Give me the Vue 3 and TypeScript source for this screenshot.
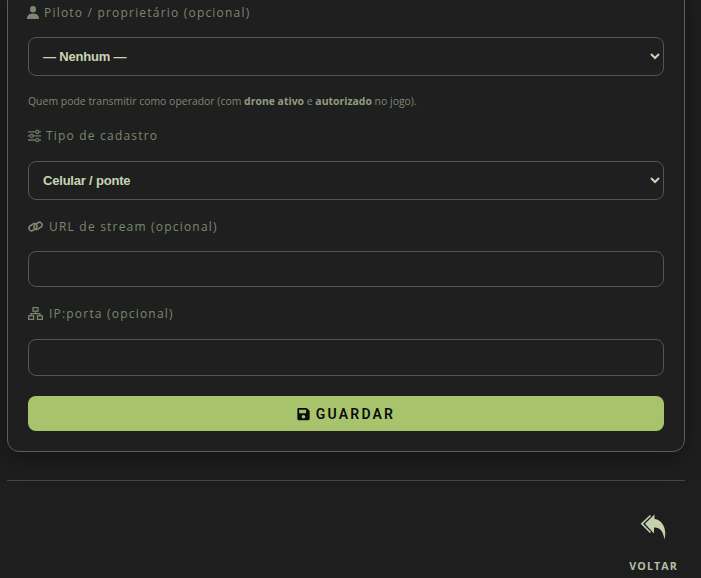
<script setup lang="ts">
const pilots: string[] = ['— Nenhum —']
const types: string[] = ['Celular / ponte']
</script>

<template>
  <div class="page">
    <form class="card" @submit.prevent>
      <label class="lbl" for="pilot">
        <svg class="ic person" width="12" height="13" viewBox="2 2 12 12" preserveAspectRatio="none" fill="currentColor"><path d="M3 14s-1 0-1-1 1-4 6-4 6 3 6 4-1 1-1 1zm5-6a3 3 0 1 0 0-6 3 3 0 0 0 0 6"/></svg>
        <span>Piloto / proprietário (opcional)</span>
      </label>
      <select id="pilot" class="ctl sel first-sel">
        <option v-for="p in pilots" :key="p">{{ p }}</option>
      </select>
      <p class="help">Quem pode transmitir como operador (com <b>drone ativo</b> e <b>autorizado</b> no jogo).</p>

      <label class="lbl second" for="kind">
        <svg class="ic" width="13" height="13" viewBox="0 0 16 16" fill="currentColor" stroke="currentColor" stroke-width="0.35"><path d="M11.5 2a1.5 1.5 0 1 0 0 3 1.5 1.500 0 0 0 0-3M9.05 3a2.5 2.5 0 0 1 4.9 0H16v1h-2.05a2.5 2.5 0 0 1-4.9 0H0V3zM4.5 7a1.5 1.5 0 1 0 0 3 1.5 1.5 0 0 0 0-3M2.05 8a2.5 2.5 0 0 1 4.9 0H16v1H6.95a2.5 2.5 0 0 1-4.9 0H0V8zm9.45 4a1.5 1.5 0 1 0 0 3 1.5 1.5 0 0 0 0-3m-2.45 1a2.5 2.5 0 0 1 4.9 0H16v1h-2.05a2.5 2.5 0 0 1-4.9 0H0v-1z"/></svg>
        <span>Tipo de cadastro</span>
      </label>
      <select id="kind" class="ctl sel">
        <option v-for="t in types" :key="t">{{ t }}</option>
      </select>

      <label class="lbl third" for="url">
        <svg class="ic wide" width="15" height="13" viewBox="0 0 15 13" fill="none" stroke="currentColor" stroke-width="1.6"><rect x="0.6" y="4.5" width="8.6" height="5.2" rx="2.6" transform="rotate(-35 5 7)"/><rect x="5.8" y="3.3" width="8.6" height="5.2" rx="2.6" transform="rotate(-35 10 6)"/></svg>
        <span>URL de stream (opcional)</span>
      </label>
      <input id="url" class="ctl inp short" type="text" />

      <label class="lbl fourth" for="ip">
        <svg class="ic wide" width="15" height="13" viewBox="0 0 15 13" fill="none" stroke="currentColor" stroke-width="1.25"><rect x="5" y="0.6" width="5" height="3.6"/><rect x="0.6" y="8.8" width="5" height="3.6"/><rect x="9.4" y="8.8" width="5" height="3.6"/><path d="M7.5 4.2v2.3M3 8.8V6.5h9v2.3"/></svg>
        <span>IP:porta (opcional)</span>
      </label>
      <input id="ip" class="ctl inp last" type="text" />

      <button class="save" type="submit">
        <svg width="13" height="14" viewBox="0 0 448 512" fill="currentColor"><path d="M433.941 129.941l-83.882-83.882A48 48 0 0 0 316.118 32H48C21.49 32 0 53.49 0 80v352c0 26.51 21.49 48 48 48h352c26.51 0 48-21.49 48-48V163.882a48 48 0 0 0-14.059-33.941zM224 416c-35.346 0-64-28.654-64-64 0-35.346 28.654-64 64-64s64 28.654 64 64c0 35.346-28.654 64-64 64zm96-304.52V212c0 6.627-5.373 12-12 12H76c-6.627 0-12-5.373-12-12V108c0-6.627 5.373-12 12-12h228.52c3.183 0 6.235 1.264 8.485 3.515l3.48 3.48A11.996 11.996 0 0 1 320 111.48z"/></svg>
        <span>GUARDAR</span>
      </button>
    </form>

    <hr class="rule" />

    <div class="back-row">
      <a class="back" href="#" @click.prevent>
        <svg width="28" height="27" viewBox="0 0 28 27"><path fill="currentColor" d="M14.5.5 5 9.8l9 9.7v-6c5-.5 9 2.5 10.5 12 3-10.500-2.500-20-10-20.500z"/><path fill="none" stroke="currentColor" stroke-width="1.6" d="M10.500 1.500 1.800 9.800l8.700 8.700"/></svg>
        <span>VOLTAR</span>
      </a>
    </div>
  </div>
</template>

<style>
html, body { margin: 0; background: #1e1e1e; overflow: hidden; }
</style>

<style scoped>
.page {
  box-sizing: border-box;
  width: 701px;
  height: 578px;
  overflow: hidden;
  padding: 0 16px 0 7px;
  background: #1e1e1e;
  font-family: "Open Sans", "Liberation Sans", sans-serif;
}
.card {
  box-sizing: border-box;
  width: 678px;
  margin-top: -18px;
  padding: 20px;
  display: flex;
  flex-direction: column;
  background: #1f1f1f;
  border: 1px solid #5c5e52;
  border-radius: 12px;
  box-shadow: 0 8px 24px rgba(0, 0, 0, 0.35);
}
.lbl {
  display: flex;
  align-items: center;
  gap: 5px;
  height: 18px;
  font-size: 12px;
  letter-spacing: 1.2px;
  color: #7a8870;
}
.ic { flex: none; }
.person { margin-left: -1px; }
.wide { margin-right: 1px; }
.ctl {
  box-sizing: border-box;
  display: block;
  width: 636px;
  background: #1f1f1f;
  border: 1px solid #55574c;
  border-radius: 8px;
  color: #c8d5b4;
  outline: none;
}
.sel {
  height: 39px;
  margin-top: 17px;
  padding: 0 10px;
  font-family: "Liberation Sans", Arial, sans-serif;
  font-size: 13px;
  letter-spacing: -0.2px;
  font-weight: 700;
  color-scheme: dark;
}
.first-sel { margin-top: 16px; }
.inp { height: 37px; margin-top: 17px; }
.short { height: 36px; margin-top: 16px; }
.help {
  margin: 18px 0 0;
  height: 14px;
  line-height: 14px;
  font-size: 10.45px;
  color: #7d8873;
}
.help b { font-weight: 700; color: #909d82; }
.second { margin-top: 18px; }
.third { margin-top: 17px; }
.fourth { margin-top: 17px; }
.save {
  box-sizing: border-box;
  width: 636px;
  height: 35px;
  margin-top: 20px;
  display: flex;
  align-items: center;
  justify-content: center;
  gap: 6px;
  background: #a7c46c;
  border: 0;
  border-radius: 8px;
  color: #0c0c0c;
  font-family: Roboto, "Liberation Sans", sans-serif;
  font-size: 14px;
  font-weight: 600;
  letter-spacing: 2.2px;
}
.rule {
  width: 678px;
  margin: 28px 0 0;
  border: 0;
  border-top: 1px solid #45473d;
}
.back-row {
  display: flex;
  justify-content: flex-end;
  padding-right: 7px;
}
.back {
  margin-top: 33px;
  display: flex;
  flex-direction: column;
  align-items: center;
  gap: 18px;
  color: #c4d3ae;
  text-decoration: none;
}
.back span {
  font-size: 10.7px;
  font-weight: 700;
  letter-spacing: 1.1px;
  color: #b5bfa6;
}
</style>
